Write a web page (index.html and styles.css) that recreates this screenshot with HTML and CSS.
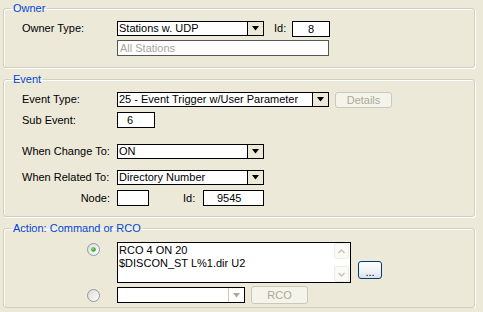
FILE: index.html
```html
<!DOCTYPE html>
<html lang="en">

<head>
    <meta charset="UTF-8">
    <title>Event Trigger</title>
    <link rel="stylesheet" href="styles.css">
</head>

<body>

    <div class="dialog">

        <fieldset class="group group-owner">
            <legend>Owner</legend>
            <div class="group-body">
                <div class="row row-combo">
                    <span class="label">Owner Type:</span>
                    <div class="combo combo-mid">
                        <span class="combo-text">Stations w. UDP</span>
                        <span class="combo-btn"><svg width="7" height="5" viewBox="0 0 7 5"><polygon points="0,0 7,0 3.5,4.5" fill="#000"/></svg></span>
                    </div>
                    <span class="id-label">Id:</span>
                    <span class="field field-id center">8</span>
                </div>
                <div class="row row-field row-stations">
                    <span class="field field-wide muted">All Stations</span>
                </div>
            </div>
        </fieldset>

        <fieldset class="group group-event">
            <legend>Event</legend>
            <div class="group-body">
                <div class="row row-type">
                    <span class="label">Event Type:</span>
                    <div class="combo combo-wide">
                        <span class="combo-text">25 - Event Trigger w/User Parameter</span>
                        <span class="combo-btn"><svg width="7" height="5" viewBox="0 0 7 5"><polygon points="0,0 7,0 3.5,4.5" fill="#000"/></svg></span>
                    </div>
                    <span class="btn btn-disabled btn-details">Details</span>
                </div>
                <div class="row row-field row-sub">
                    <span class="label">Sub Event:</span>
                    <span class="field field-sub">6</span>
                </div>
                <div class="row row-combo row-change">
                    <span class="label">When Change To:</span>
                    <div class="combo combo-mid">
                        <span class="combo-text">ON</span>
                        <span class="combo-btn"><svg width="7" height="5" viewBox="0 0 7 5"><polygon points="0,0 7,0 3.5,4.5" fill="#000"/></svg></span>
                    </div>
                </div>
                <div class="row row-combo row-related">
                    <span class="label">When Related To:</span>
                    <div class="combo combo-mid">
                        <span class="combo-text">Directory Number</span>
                        <span class="combo-btn"><svg width="7" height="5" viewBox="0 0 7 5"><polygon points="0,0 7,0 3.5,4.5" fill="#000"/></svg></span>
                    </div>
                </div>
                <div class="row row-field row-node">
                    <span class="label label-right">Node:</span>
                    <span class="field field-node"></span>
                    <span class="id-label id-label-node">Id:</span>
                    <span class="field field-num">9545</span>
                </div>
            </div>
        </fieldset>

        <fieldset class="group group-action">
            <legend>Action: Command or RCO</legend>
            <div class="group-body">
                <div class="row row-memo">
                    <span class="label label-radio">
                        <svg class="radio" width="13" height="13" viewBox="0 0 13 13">
                            <defs>
                                <linearGradient id="rg1" x1="0" y1="0" x2="1" y2="1">
                                    <stop offset="0" stop-color="#dcdad0"/>
                                    <stop offset="1" stop-color="#ffffff"/>
                                </linearGradient>
                            </defs>
                            <circle cx="6.5" cy="6.5" r="6" fill="url(#rg1)" stroke="#8a99a8"/>
                            <circle cx="6.5" cy="6.5" r="2.3" fill="#3aae3a"/>
                            <circle cx="6" cy="6" r="0.9" fill="#9adf8e"/>
                        </svg>
                    </span>
                    <div class="memo">
                        <div class="memo-text">RCO 4 ON 20<br>$DISCON_ST L%1.dir U2</div>
                        <div class="scroll">
                            <span class="scroll-btn"><svg width="7" height="5" viewBox="0 0 7 5"><polyline points="0.5,4 3.5,1 6.5,4" fill="none" stroke="#c4c2b8" stroke-width="1.4"/></svg></span>
                            <span class="scroll-btn"><svg width="7" height="5" viewBox="0 0 7 5"><polyline points="0.5,1 3.5,4 6.5,1" fill="none" stroke="#c4c2b8" stroke-width="1.4"/></svg></span>
                        </div>
                    </div>
                    <span class="btn btn-more">...</span>
                </div>
                <div class="row row-rco">
                    <span class="label label-radio">
                        <svg class="radio" width="13" height="13" viewBox="0 0 13 13">
                            <defs>
                                <linearGradient id="rg2" x1="0" y1="0" x2="1" y2="1">
                                    <stop offset="0" stop-color="#dcdad0"/>
                                    <stop offset="1" stop-color="#ffffff"/>
                                </linearGradient>
                            </defs>
                            <circle cx="6.5" cy="6.5" r="6" fill="url(#rg2)" stroke="#8a99a8"/>
                        </svg>
                    </span>
                    <div class="combo combo-rco">
                        <span class="combo-text"></span>
                        <span class="combo-btn combo-btn-off"><svg width="7" height="5" viewBox="0 0 7 5"><polygon points="0,0 7,0 3.5,4.5" fill="#aca899"/></svg></span>
                    </div>
                    <span class="btn btn-disabled btn-rco">RCO</span>
                </div>
            </div>
        </fieldset>

    </div>

</body>

</html>
```

FILE: styles.css
```css
body {
    margin: 0;
    background-color: #ece9d8;
    font-family: 'Liberation Sans', Arial, sans-serif;
    font-size: 11px;
    color: #000;
}

.dialog {
    width: 472px;
    padding: 2px 0 0 3px;
}

.group {
    margin: 0;
    padding: 0;
    min-width: 0;
    border: 1px solid #d0d0bf;
    border-radius: 3px;
    box-shadow: inset 1px 1px 0 #fff, 1px 1px 0 #fff;
}

.group legend {
    margin-left: 7px;
    padding: 0 2px;
    line-height: 13px;
    color: #0046d5;
}

.group-event,
.group-action {
    margin-top: 5px;
}

.group-body {
    padding-left: 18px;
}

.group-owner .group-body {
    padding-top: 6px;
    padding-bottom: 11px;
}

.group-event .group-body {
    padding-top: 6px;
    padding-bottom: 10px;
}

.group-action .group-body {
    padding-top: 7px;
    padding-bottom: 3px;
}

.row {
    display: flex;
    align-items: center;
}

.row-combo {
    height: 15px;
}

.row-field {
    height: 16px;
}

.row-stations {
    margin-top: 4px;
    padding-left: 95px;
}

.row-type {
    height: 16px;
    align-items: flex-start;
}

.row-type .label {
    line-height: 15px;
}

.row-sub {
    margin-top: 4px;
}

.row-change {
    margin-top: 16px;
}

.row-related {
    margin-top: 11px;
}

.row-node {
    margin-top: 5px;
}

.row-memo {
    height: 41px;
    align-items: stretch;
}

.row-rco {
    height: 18px;
    margin-top: 3px;
}

.label {
    width: 95px;
    flex-shrink: 0;
    line-height: 13px;
    white-space: nowrap;
}

.label-right {
    text-align: right;
    padding-right: 7px;
    box-sizing: border-box;
}

.label-radio {
    display: flex;
    align-items: center;
    padding-left: 65px;
    box-sizing: border-box;
}

.row-memo .label-radio {
    align-items: flex-start;
    padding-top: 1px;
}

.radio {
    display: block;
}

.id-label {
    width: 18px;
    margin-left: 10px;
    line-height: 13px;
}

.id-label-node {
    width: 20px;
    margin-left: 34px;
}

/* text boxes */
.field {
    display: block;
    height: 16px;
    box-sizing: border-box;
    border: 1px solid #000;
    background-color: #fff;
    line-height: 14px;
    white-space: nowrap;
}

.field-id {
    width: 38px;
}

.field-wide {
    width: 212px;
    padding-left: 2px;
    border-color: #555;
}

.field-sub {
    width: 38px;
    padding-left: 9px;
}

.field-node {
    width: 32px;
}

.field-num {
    width: 61px;
    padding-left: 13px;
}

.center {
    text-align: center;
}

.muted {
    color: #a7a6a0;
}

/* combo boxes */
.combo {
    display: flex;
    height: 15px;
    box-sizing: border-box;
    border: 1px solid #000;
    background-color: #fff;
}

.combo-mid {
    width: 147px;
}

.combo-wide {
    width: 212px;
}

.combo-rco {
    width: 128px;
    height: 16px;
}

.combo-text {
    flex: 1;
    padding-left: 1px;
    line-height: 13px;
    white-space: nowrap;
    overflow: hidden;
}

.combo-btn {
    width: 15px;
    border-left: 1px solid #000;
    background-color: #ece9d8;
    display: flex;
    align-items: center;
    justify-content: center;
}

.combo-btn-off {
    border-left-color: #c9c7ba;
    background-color: #fff;
}

/* buttons */
.btn {
    display: flex;
    align-items: center;
    justify-content: center;
    box-sizing: border-box;
    border-radius: 3px;
}

.btn-disabled {
    border: 1px solid #cac8bb;
    background-color: #f5f4ea;
    color: #aca899;
}

.btn-details {
    width: 57px;
    height: 16px;
    margin-left: 6px;
}

.btn-rco {
    width: 57px;
    height: 18px;
    margin-left: 6px;
}

.btn-more {
    align-self: flex-end;
    width: 24px;
    height: 18px;
    margin: 0 0 4px 7px;
    border: 1px solid #003c74;
    background: linear-gradient(#ffffff, #eef2f6 60%, #d8dfe8);
    line-height: 10px;
    padding-top: 3px;
}

/* memo */
.memo {
    display: flex;
    width: 234px;
    box-sizing: border-box;
    border: 1px solid #000;
    background-color: #fff;
}

.memo-text {
    flex: 1;
    padding: 1px 0 0 1px;
    line-height: 13px;
    white-space: nowrap;
}

.scroll {
    width: 15px;
    display: flex;
    flex-direction: column;
    justify-content: space-between;
    padding: 0 1px 0 0;
}

.scroll-btn {
    height: 16px;
    box-sizing: border-box;
    border: 1px solid #eeede5;
    border-radius: 2px;
    background-color: #fafaf6;
    display: flex;
    align-items: center;
    justify-content: center;
}
```
